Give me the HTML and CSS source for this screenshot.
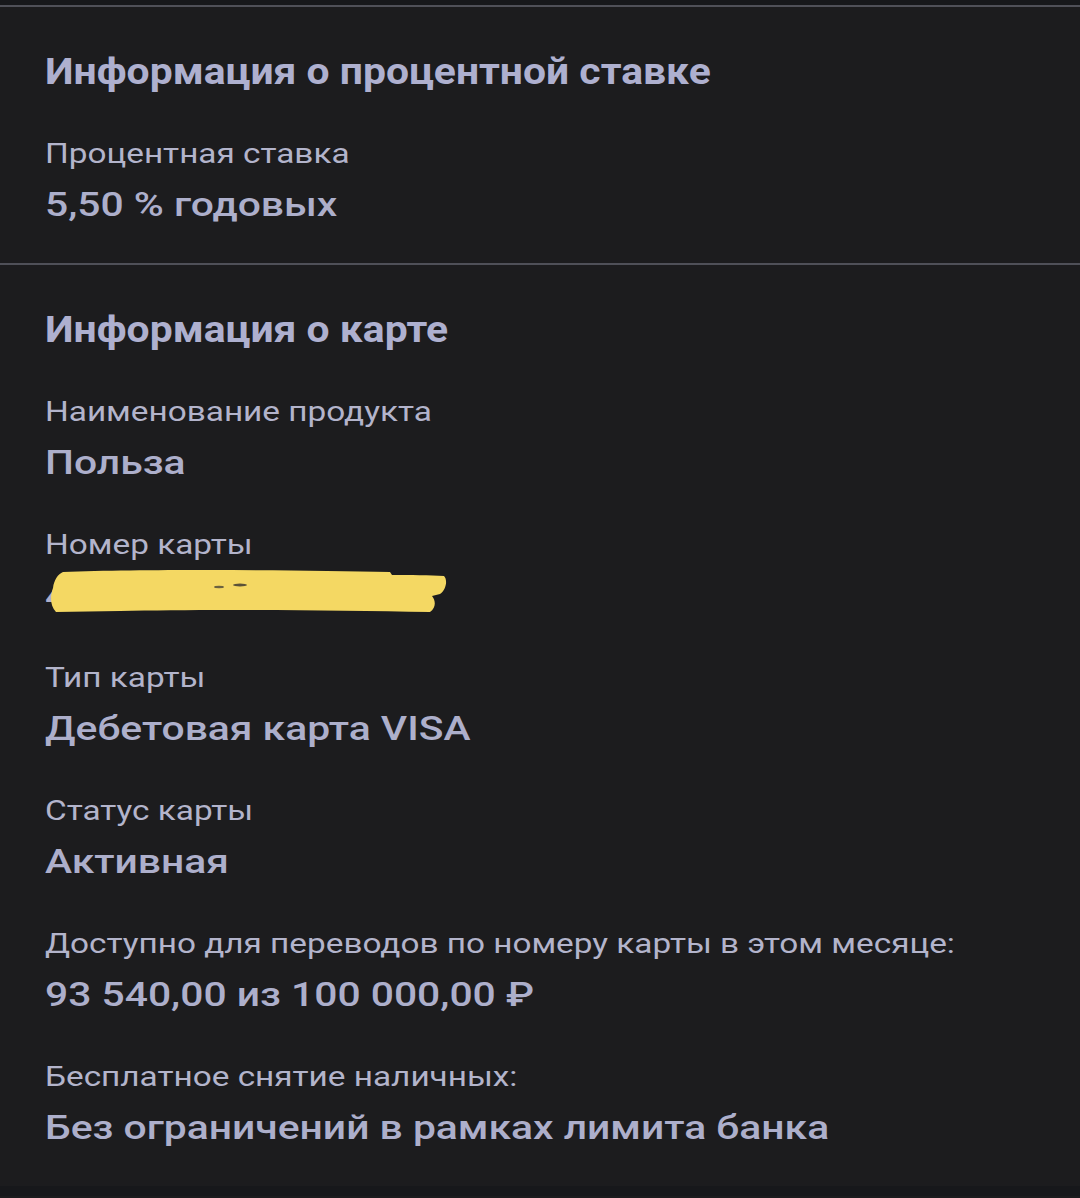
FILE: index.html
```html
<html>
<head>
	<meta charset="utf-8">
	<link rel="stylesheet" href="styles.css">
</head>
<body>
	<div class="topStrip"></div>

	<div class="block">
		<div class="blockTitle">Информация о процентной ставке</div>
		<div class="field">
			<div class="label">Процентная ставка</div>
			<div class="value">5,50 % годовых</div>
		</div>
	</div>

	<div class="block">
		<div class="blockTitle">Информация о карте</div>
		<div class="field">
			<div class="label">Наименование продукта</div>
			<div class="value">Польза</div>
		</div>
		<div class="field">
			<div class="label">Номер карты</div>
			<div class="value hidden">4</div>
			<svg class="scribble" viewBox="45 565 410 55" width="410" height="55">
				<path d="M63 574 C150 571 300 572 390 574 L392 577 C410 577 430 577 444 578 C448 582 446 592 440 596 L432 598 C436 603 436 610 430 614 C330 612 200 611 120 613 L56 614 C50 608 50 598 53 590 C54 582 58 576 63 574 Z" fill="#f4d863"/>
				<ellipse cx="219" cy="589" rx="5" ry="1.2" fill="#6b6240"/>
				<ellipse cx="240" cy="587" rx="7" ry="1.4" fill="#5a5238"/>
			</svg>
		</div>
		<div class="field">
			<div class="label">Тип карты</div>
			<div class="value">Дебетовая карта VISA</div>
		</div>
		<div class="field">
			<div class="label">Статус карты</div>
			<div class="value">Активная</div>
		</div>
		<div class="field">
			<div class="label">Доступно для переводов по номеру карты в этом месяце:</div>
			<div class="value">93 540,00 из 100 000,00 ₽</div>
		</div>
		<div class="field">
			<div class="label">Бесплатное снятие наличных:</div>
			<div class="value">Без ограничений в рамках лимита банка</div>
		</div>
	</div>

	<div class="bottomStrip"></div>
</body>
</html>
```

FILE: styles.css
```css
body {
	margin: 0;
	background: #1c1c1e;
	color: #adafcb;
	font-family: Roboto, "Noto Sans", sans-serif;
	overflow: hidden;
}

.topStrip {
	height: 5px;
	background: #17181b;
}
.bottomStrip {
	height: 10px;
	background: #17181b;
}

.block {
	border-top: 2px solid #4f5058;
	padding: 43px 45px 38px 45px;
}
.block:last-of-type {
	border-bottom: 2px solid #4f5058;
	padding-bottom: 40px;
}

/* the screenshot is stretched sideways, so the text is too */
.blockTitle, .label, .value {
	width: fit-content;
	transform-origin: left center;
}

.blockTitle {
	font-size: 36px;
	font-weight: 700;
	line-height: 44px;
	color: #aeb0cf;
	margin-bottom: 42px;
	transform: scaleX(1.135);
}

.field {
	margin-top: 44px;
	position: relative;
}
.blockTitle + .field {
	margin-top: 0;
}

.label {
	font-size: 28px;
	line-height: 36px;
	color: #b3b4cb;
	margin-bottom: 11px;
	transform: scaleX(1.19);
}
.value {
	font-size: 34px;
	font-weight: 500;
	line-height: 42px;
	transform: scaleX(1.2);
}

.scribble {
	position: absolute;
	left: 0;
	top: 36px;
}
```
